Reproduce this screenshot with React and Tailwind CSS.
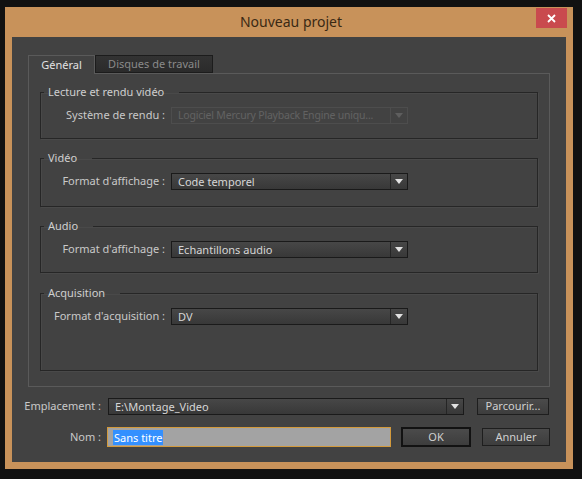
import React from 'react';

const font = { fontFamily: '"Noto Sans", "Open Sans", sans-serif' };

const Arrow = ({ disabled }) => (
  <svg width="8" height="5" viewBox="0 0 8 5">
    <path d="M0 0 L8 0 L4 5 Z" fill={disabled ? '#5e5e5e' : '#e2e2e2'} />
  </svg>
);

const Select = ({ value, disabled, className }) => (
  <div
    className={`flex h-[17px] border ${
      disabled
        ? 'border-[#4d4d4d] text-[#626262]'
        : 'border-[#1a1a1a] bg-gradient-to-b from-[#474747] to-[#383838] text-[#d6d6d6]'
    } ${className}`}
  >
    <div
      className={`flex-1 min-w-0 flex items-center pl-[6px] leading-none whitespace-nowrap overflow-hidden ${
        disabled ? 'text-[10.5px] tracking-[-0.2px]' : 'text-[11px]'
      }`}
    >
      {value}
    </div>
    <div
      className={`w-[17px] shrink-0 flex items-center justify-center border-l ${
        disabled ? 'border-[#4d4d4d]' : 'border-[#252525]'
      }`}
    >
      <Arrow disabled={disabled} />
    </div>
  </div>
);

const Group = ({ title, height, children, className }) => (
  <fieldset
    className={`border border-[#262626] shadow-[inset_1px_1px_0_#494949,1px_1px_0_#494949] mx-[11px] ${height} ${className}`}
  >
    <legend className="ml-[3px] pl-[4px] pr-[15px] text-[11px] leading-[16px] text-[#cfcfcf]">
      {title}
    </legend>
    {children}
  </fieldset>
);

const Row = ({ label, children }) => (
  <div className="flex items-center pt-[7px]">
    <div className="w-[130px] shrink-0 text-right pr-[6px] text-[11px] text-[#c9c9c9] whitespace-nowrap">{label}</div>
    {children}
  </div>
);

const Button = ({ children, className }) => (
  <div
    className={`flex items-center justify-center bg-gradient-to-b from-[#4b4b4b] to-[#3d3d3d] text-[11px] text-[#d0d0d0] ${className}`}
  >
    {children}
  </div>
);

export default function App() {
  return (
    <div className="w-[582px] h-[479px] bg-[#111111] pl-[5px] pt-[7px]" style={font}>
      <div className="w-[568px] h-[462px] bg-[#c8925a] flex flex-col">
        {/* title bar */}
        <div className="h-[30px] flex items-start relative">
          <div className="flex-1 text-center text-[14px] leading-[30px] text-[#3a2914] pl-[4px]">
            Nouveau projet
          </div>
          <div className="absolute right-[6px] top-[1px] w-[31px] h-[20px] bg-[#c94a4e] flex items-center justify-center">
            <svg width="9" height="9" viewBox="0 0 9 9">
              <path d="M1 1 L8 8 M8 1 L1 8" stroke="#ffffff" strokeWidth="1.8" />
            </svg>
          </div>
        </div>

        {/* content */}
        <div className="mx-[7px] h-[425px] bg-[#424242] flex flex-col pt-[18px]">
          {/* tabs */}
          <div className="flex items-end ml-[16px] h-[18px]">
            <div className="relative z-10 w-[67px] h-[19px] -mb-px bg-[#424242] border border-b-0 border-[#5a5a5a] flex items-center justify-center text-[11px] text-[#e2e2e2]">
              Général
            </div>
            <div className="w-[118px] h-[18px] bg-gradient-to-b from-[#333333] to-[#2b2b2b] border border-[#1c1c1c] flex items-center justify-center text-[11px] text-[#8a8a8a]">
              Disques de travail
            </div>
          </div>

          {/* tab panel */}
          <div className="ml-[16px] w-[522px] h-[314px] border border-[#5a5a5a] pt-[10px] flex flex-col">
            <Group title="Lecture et rendu vidéo" height="h-[55px]">
              <Row label="Système de rendu :">
                <Select
                  disabled
                  value="Logiciel Mercury Playback Engine uniqu..."
                  className="w-[237px]"
                />
              </Row>
            </Group>
            <Group title="Vidéo" height="h-[57px]" className="mt-[11px]">
              <Row label="Format d'affichage :">
                <Select value="Code temporel" className="w-[237px]" />
              </Row>
            </Group>
            <Group title="Audio" height="h-[55px]" className="mt-[11px]">
              <Row label="Format d'affichage :">
                <Select value="Echantillons audio" className="w-[237px]" />
              </Row>
            </Group>
            <Group title="Acquisition" height="h-[86px]" className="mt-[12px]">
              <Row label="Format d'acquisition :">
                <Select value="DV" className="w-[237px]" />
              </Row>
            </Group>
          </div>

          {/* bottom rows */}
          <div className="flex items-center mt-[11px]">
            <div className="w-[89px] text-right text-[11px] text-[#c9c9c9] whitespace-nowrap">Emplacement :</div>
            <Select value="E:\Montage_Video" className="ml-[7px] w-[356px]" />
            <Button className="ml-[13px] w-[72px] h-[17px] border border-[#1e1e1e]">Parcourir...</Button>
          </div>
          <div className="flex items-center mt-[12px]">
            <div className="w-[89px] text-right text-[11px] text-[#c9c9c9]">Nom :</div>
            <div className="ml-[6px] w-[284px] h-[20px] border border-[#d39a3c] bg-[#a3a3a3] flex items-center pl-[5px]">
              <span className="bg-[#3390ff] text-white text-[11px] leading-[15px] px-px">Sans titre</span>
            </div>
            <Button className="ml-[10px] w-[70px] h-[20px] border-2 border-[#121212]">OK</Button>
            <Button className="ml-[11px] w-[68px] h-[18px] border border-[#1e1e1e]">Annuler</Button>
          </div>
        </div>
      </div>
    </div>
  );
}
